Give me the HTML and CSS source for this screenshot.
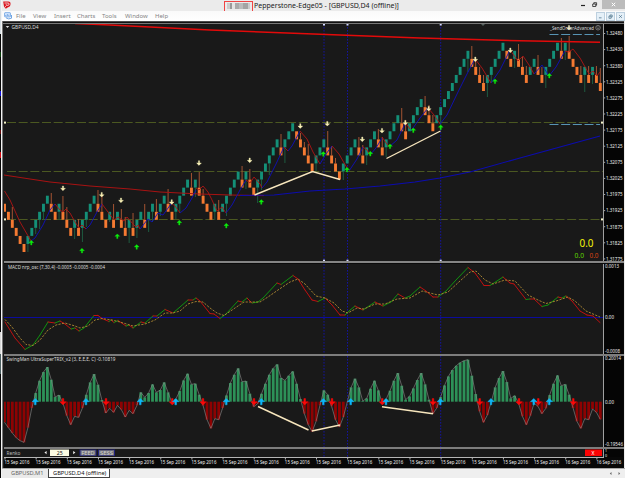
FILE: index.html
```html
<!DOCTYPE html>
<html lang="en">
<head>
<meta charset="utf-8">
<title>Pepperstone-Edge05 - [GBPUSD,D4 (offline)]</title>
<link rel="stylesheet" href="styles.css">
</head>
<body>
<div class="edge"></div>
<div class="window">
  <header class="titlebar">
    <svg class="logo" width="8" height="8" viewBox="0 0 8 8"><path d="M.2.5H5.4A2.4 2.4 0 0 1 7.5 3.2C7.5 5 6 6 4.6 6.6L2.8 7.7 1 5.6Z" fill="#d9131c"/><path d="M1.5 2H5a1.1 1.1 0 0 1 0 2.3H3.2V3.3M2 5.2 3 6.1" fill="none" stroke="#fff" stroke-width=".75"/></svg>
    <div class="caption"><span class="account"><i></i></span><span class="name">Pepperstone-Edge05 - [GBPUSD,D4 (offline)]</span></div>
    <div class="controls">
      <svg width="17" height="9" viewBox="0 0 17 9" fill="none" stroke="#222"><path d="M0 5.5H4" stroke-width="1.2"/><path d="M11.7 4H14.8V6.5H11.7ZM12.8 4V2.7H15.6V5.2H14.8" stroke-width=".8"/></svg>
      <span class="close"><svg width="5" height="5" viewBox="0 0 5 5"><path d="M.8.8 4.2 4.2M4.2.8.8 4.2" stroke="#fff"/></svg></span>
    </div>
  </header>
  <nav class="menubar">
    <svg class="docicon" width="8" height="8" viewBox="0 0 8 8"><rect x=".6" y=".7" width="5.8" height="4.2" rx=".5" fill="#dcecff" stroke="#5f9be0" stroke-width=".8"/><path d="M1.8 3V4M3.3 2V4M4.8 2.6V4" stroke="#4a87d4" stroke-width=".7"/><path d="M2 5.8Q4.5 7.8 7.5 6.2V3" fill="none" stroke="#5f9be0" stroke-width=".9"/></svg>
    <span class="m1">File</span><span class="m2">View</span><span class="m3">Insert</span><span class="m4">Charts</span><span class="m5">Tools</span><span class="m6">Window</span><span class="m7">Help</span>
    <div class="mdi">
      <b><svg viewBox="0 0 8 8"><path d="M2.2 5.5H5.2"/></svg></b><b><svg viewBox="0 0 8 8"><path d="M2.2 3.7H4.7V6H2.2ZM3.4 3.7V2.3H5.9V4.6H4.7"/></svg></b><b><svg viewBox="0 0 8 8"><path d="M2.5 2.5 5.5 5.5M5.5 2.5 2.5 5.5"/></svg></b>
    </div>
  </nav>
  <main class="chart">
    <div class="row price"><svg id="price" viewBox="4 24 599 237"></svg><svg id="priceAxis" class="axis" viewBox="603 24 20 237"></svg></div>
    <div class="divider"></div>
    <div class="row macd"><svg id="macd" viewBox="4 264 599 90"></svg><svg id="macdAxis" class="axis" viewBox="603 264 20 90"></svg></div>
    <div class="divider thin"></div>
    <div class="row trix"><svg id="trix" viewBox="4 356 599 91"></svg><svg id="trixAxis" class="axis" viewBox="603 356 20 91"></svg></div>
    <div class="divider thin"></div>
    <div class="row renko"><svg id="renko" viewBox="4 449 599 8"></svg><svg id="renkoAxis" class="axis" viewBox="603 449 20 8"></svg></div>
    <div class="row dates"><svg id="dates" viewBox="4 457 619 11"></svg></div>
  </main>
  <footer class="tabs"><span class="tab">GBPUSD,M1</span><span class="tab active">GBPUSD,D4 (offline)</span><svg class="scroll" width="12" height="5" viewBox="0 0 12 5"><path d="M2.5 1V4L.8 2.5ZM9.5 1V4L11.2 2.5Z" fill="#666"/></svg></footer>
</div>
<script src="chart.js"></script>
</body>
</html>
```
FILE: styles.css
```css
* { box-sizing: border-box; }
body {
  margin: 0;
  width: 625px;
  height: 478px;
  overflow: hidden;
  display: flex;
  background: #ececec;
  font-family: "Noto Sans", "Open Sans", sans-serif;
}
.edge {
  flex: 0 0 2px;
  border-right: 1px solid #f4f4f4;
  background: linear-gradient(#d5dde2 0 34px, #050505 34px 52px, #063c08 52px 57px, #050505 57px 91px, #1010dd 91px 96px, #050505 96px 130px, #640808 130px 134px, #050505 134px 152px, #d40a12 152px 158px, #050505 158px 332px, #d8d8d8 332px 354px, #4c6062 354px 374px, #050505 374px);
}
.window { flex: 1; display: flex; flex-direction: column; min-width: 0; }
.titlebar { height: 11px; background: #ebebeb; display: flex; align-items: flex-start; }
.logo { margin: 1px 0 0 1px; flex: none; }
.caption { display: flex; margin-left: 213px; padding-top: 1px; height: 12px; }
.account { width: 29px; height: 11px; border: 1px solid #f04444; padding: 1px 2px; }
.account i { display: block; width: 23px; height: 6px; background: linear-gradient(90deg, #ccc 0 3px, #999 3px 5px, #e3e3e3 5px 8px, #aaa 8px 12px, #bbb 12px 16px, #a4a4a4 16px 21px, #ccc 21px); }
.name { margin-left: 1px; font-size: 7px; line-height: 9px; color: #222; white-space: nowrap; width: 148px; }
.controls { display: flex; margin-left: auto; }
.controls svg { display: block; margin-right: 4px; }
.controls .close { width: 23px; height: 9px; background: #bcbcbc; padding: 2px 0 0 9px; }
.menubar { height: 10px; background: linear-gradient(#fafafa, #fff); display: flex; align-items: center; font-size: 6px; line-height: 9px; color: #858585; }
.docicon { margin-left: 2px; flex: none; }
.menubar span { flex: none; white-space: nowrap; }
.m1 { width: 17px; margin-left: 4px; }
.m2 { width: 21px; }
.m3 { width: 23px; }
.m4 { width: 25px; }
.m5 { width: 23px; }
.m6 { width: 30px; }
.mdi { margin-left: auto; display: flex; gap: 1px; }
.mdi b { width: 9px; height: 9px; border: 1px solid #bdd0df; background: #e5f0f8; }
.mdi svg { display: block; width: 7px; height: 7px; fill: none; stroke: #53788f; stroke-width: .9; }
.chart { width: 622px; height: 447px; background: linear-gradient(90deg, #777 1px, #1b1b1b 1px 2px, #080808 2px); padding-left: 2px; display: flex; flex-direction: column; }
.chart::before { content: ""; flex: 0 0 3px; margin-left: -1px; background: linear-gradient(#4a4a4a 1px, #111 1px 2px, #777 2px); }
.row { display: flex; flex: none; }
.row svg { display: block; overflow: hidden; background: #191919; flex: none; width: 599px; }
.row svg.axis { background: #050505; width: 20px; overflow: visible; }
.price, .price svg { height: 237px; }
.macd, .macd svg { height: 90px; }
.trix, .trix svg { height: 91px; }
.renko, .renko svg { height: 8px; }
.dates, .row.dates svg { height: 11px; width: 619px; background: #080808; }
.divider { flex: none; height: 3px; background: linear-gradient(#858585 0 2px, #0b0b0b 2px); }
.divider.thin { height: 2px; background: #7d7d7d; }
.chart text { font-family: "Noto Sans", sans-serif; }
.tabs { flex: 1; background: #efefef; border-top: 1px solid #aaa; display: flex; font-size: 5.7px; line-height: 8px; color: #666; white-space: nowrap; }
.tab { padding: 0 0 0 9px; width: 46px; background: #eaeaea; }
.tab.active { width: 62px; padding-left: 4px; background: #fff; color: #111; border: solid #444; border-width: 0 1px 1px; }
.scroll { margin: 2px 4px 0 auto; }
```
FILE: chart.js
```js
const NS = 'http://www.w3.org/2000/svg';
const X0 = 4.53, STEP = 3.894;
const xAt = i => X0 + STEP * i;
const pane = id => document.getElementById(id);

function add(parent, tag, attrs, text) {
  const el = document.createElementNS(NS, tag);
  for (const k in attrs) el.setAttribute(k, attrs[k]);
  if (text !== undefined) el.textContent = text;
  parent.appendChild(el);
  return el;
}
const line = (p, pts, stroke, width = 1, extra = {}) =>
  add(p, 'polyline', { points: pts, fill: 'none', stroke, 'stroke-width': width, ...extra });
const rect = (p, x, y, width, height, fill) => add(p, 'rect', { x, y, width, height, fill });
function label(p, x, y, text, size, fill, length) {
  const a = { x, y, 'font-size': size, fill };
  if (length) { a.textLength = length; a.lengthAdjust = 'spacingAndGlyphs'; }
  add(p, 'text', a, text);
}
function arrow(p, x, y, dir, fill, s = 1) {
  add(p, 'path', {
    d: 'M-.6 2.3V0H-2.4L0-2.4 2.4 0H.6V2.3Z', fill, stroke: fill, 'stroke-width': .35,
    transform: `translate(${x} ${y}) scale(${s} ${s * dir})`
  });
}
function verticals(p, y1, y2) {
  for (const x of [324, 347.5, 440.7])
    line(p, `${x},${y1} ${x},${y2}`, '#1414a0', 1, { 'stroke-dasharray': '1.6 1.4' });
}

/* ---------- price pane ---------- */
const price = pane('price');
for (const y of [122.5, 171.5, 219.5])
  line(price, `7,${y} 603,${y}`, '#4b5821', 1, { 'stroke-dasharray': '9 2.67' });
verticals(price, 24, 261);

const runs = 'D6 U6 D2 U1 D3 U1 D1 U4 D3 U1 D1 U1 D2 U1 D1 U2 D1 U2 D1 U2 D2 U4 D1 U1 D4 U1 D1 U5 D1 U1 D2 U6 D1 U3 D5 U3 D4 U4 D2 U3 D2 U4 D2 U4 D3 U9 D4 U5 D2 U1 D3 U2 D2 U4 D1 U1 D4 U1 D1 U1 D2';
const wicks = {
  2: 207, 6: 252, 8: 234, 9: 229, 10: 220, 12: 193, 14: 220, 15: 196, 16: 207, 18: 239, 19: 219, 20: 242, 21: 227, 24: 190, 25: 194,
  27: 222, 28: 204, 30: 209, 31: 217, 32: 243, 33: 213, 34: 238, 36: 204, 37: 232, 38: 222, 39: 199, 40: 216, 42: 189, 44: 219,
  45: 212, 48: 173, 49: 197, 50: 172, 51: 189, 54: 220, 55: 200, 57: 216, 61: 166, 62: 189, 63: 169, 65: 203, 66: 190,
  68: 175, 71: 134, 72: 163, 76: 133, 77: 142, 78: 144, 80: 171, 83: 131, 84: 146, 85: 158, 87: 180, 91: 137,
  92: 145, 93: 165, 96: 129, 97: 137, 98: 157, 102: 108, 103: 120, 108: 96, 109: 105, 110: 115, 112: 130,
  119: 72, 120: 46, 121: 59, 122: 67, 123: 75, 124: 97, 125: 83, 131: 68, 132: 44, 133: 57, 134: 66, 137: 55, 138: 67, 139: 88,
  143: 38, 144: 60, 145: 36, 148: 66, 149: 92, 150: 66, 151: 84, 152: 66, 153: 68
};
let level = 6, bar = 0;
for (const run of runs.split(' ')) {
  const up = run[0] === 'U';
  for (let k = 0; k < +run.slice(1); k++, bar++) {
    level += up ? 1 : -1;
    const bottom = 252 - 8.05 * level, x = xAt(bar);
    if (wicks[bar]) {
      const y1 = up ? bottom : wicks[bar], y2 = up ? wicks[bar] : bottom - 8;
      rect(price, x - .5, y1, 1, Math.max(0, y2 - y1), up ? '#1e5a40' : '#a35332');
    }
    rect(price, x - 1.45, bottom - 8, 2.9, 8, up ? '#149078' : '#f57a32');
  }
}

line(price, '75,23.5 110,25 160,27.5 210,30 320,34.3 420,38 520,40.8 600,42.2', '#e30a0a', 1.5);
line(price, '4,175 30,179 50,182 90,186 130,189 160,192 200,194 230,195 264,195.6', '#a81212', 1);
line(price, '240,195.5 274,195 310,191 345,189 380,186 415,182 440,178 470,172 520,158 560,147 600,136', '#0c0cae', 1.1);
const fast = [
  ['r', '4.5,191 10,200 20,222 31,241'], ['b', '31,241 35,238 43,225 50,210 55,204'],
  ['r', '55,204 60,210 63,212 66,209 70,213 75,222 79,228 82,225 86,229'], ['b', '86,229 90,225 97,212 102,204'],
  ['r', '102,204 108,212 114,220 118,217 124,221 127,217 133,224 136,227 138,225 140,229'],
  ['b', '140,229 148,219 152,222 158,213 163,215 171,204'], ['r', '171,203 175,206 180,213'],
  ['b', '180,213 186,208 192,198 196,190'], ['r', '196,188 199,190 203,186 208,192 212,200 217,211 222,207 226,213'],
  ['b', '226,213 232,205 240,190 246,180'], ['r', '246,180 250,183 254,177 260,184 262,188'],
  ['b', '262,188 267,182 276,164 284,147'], ['r', '284,147 288,151'], ['b', '288,151 292,146 300,131'],
  ['r', '300,131 307,139 313,152 320,164'], ['b', '320,164 326,154 332,146'], ['r', '332,146 339,154 347,168'],
  ['b', '349,171 357,159 363,147'], ['r', '363,147 367,150 370,155'], ['b', '370,155 376,148 382,138'],
  ['r', '382,137 389,147'], ['b', '389,147 397,140 405,124'], ['r', '405,122 410,129'],
  ['b', '411,131 420,118 428,108'], ['r', '428,108 434,115 440,124'], ['b', '440,124 447,115 458,92 468,72 475,59'],
  ['r', '475,59 482,68 491,83'], ['b', '491,83 500,70 510,50'], ['r', '510,50 518,61 523,56 529,65 534,74'],
  ['b', '534,74 542,65 549,76 556,67 565,51'], ['r', '565,51 569,52 573,49 580,58 589,74 593,71 597,76 600,72']
];
for (const [c, pts] of fast) line(price, pts, c === 'r' ? '#b01414' : '#1010bb', .9);

line(price, '254.5,195 312.5,171.5 340,179.5', '#f7e6bd', 1.4);
line(price, '386.5,158.5 440.5,131', '#f7e6bd', 1.4);
for (const y of [34.5, 124.5])
  line(price, `549.5,${y} 600,${y}`, '#5794b4', 1, { 'stroke-dasharray': '9 2.67' });

for (const [x, y] of [[63, 188.3], [101.7, 194.7], [121, 200.3], [171.7, 202], [199, 163], [249.7, 160.3], [300.3, 126], [327.3, 123.7], [362.3, 139.3], [382, 130.7], [405.3, 122.7], [428.7, 108.7], [475.3, 59.3], [510.3, 50.3], [569, 27.7]])
  arrow(price, x, y, -1, '#fbf3b8', 1);
for (const [x, y] of [[31.3, 242.7], [82, 250.7], [117.3, 236.3], [136.7, 247], [179.3, 222.7], [226.3, 225.7], [261.3, 202], [323.3, 154], [347, 169.7], [370.3, 153.7], [390, 146.3], [413.3, 130.3], [440.7, 127.3], [495, 81.3], [549.3, 75.7]])
  arrow(price, x, y, 1, '#0cf00c', 1);

for (const x of [324, 347.5, 440.7]) {
  rect(price, x - 1, 24, 2, 1.5, '#d7dcff');
  rect(price, x - 1, 259.7, 2, 1.6, '#d7dcff');
}
for (const y of [122.6, 219.4]) {
  rect(price, 4, y - 1, 2, 2, '#f5f3c8');
  rect(price, 601, y - 1, 2, 2, '#f5f3c8');
}
add(price, 'path', { d: 'M481 24H485L483 26Z', fill: '#55625f' });
add(price, 'path', { d: 'M5.7 26H9.3L7.5 28Z', fill: '#ddd' });
label(price, 11.5, 29, 'GBPUSD,D4', 5, '#dcdcdc', 27);
label(price, 550, 29.6, '_SendOrderAdvanced', 5, '#dcdcdc', 44);
add(price, 'circle', { cx: 598, cy: 27.7, r: 2.3, fill: 'none', stroke: '#aaa', 'stroke-width': .6 });
add(price, 'path', { d: 'M597 27.3V28L598 28.8 599 28V27.3M597.2 26.5H597.6M598.4 26.5H598.8', fill: 'none', stroke: '#aaa', 'stroke-width': .5 });
label(price, 579.5, 247.3, '0.0', 10, '#f6f60a', 14);
label(price, 574.5, 257.5, '0.0', 6.5, '#5ed400', 9.5);
label(price, 589.5, 257.5, '0.0', 6.5, '#d84414', 9);

/* ---------- MACD pane ---------- */
const macd = pane('macd');
verticals(macd, 264, 354);
line(macd, '4,317.5 603,317.5', '#0b0b9c', 1);
const main = '5,322 15,338 25,349.5 33,345 40,335 48,322 55,323 60,321 65,324 71,329 75,328 79,331 84,328 94,315.5 98,315.5 102,318.5 109,321.5 111,320 114,322.5 118,320.5 126,326 129,325 133,328 141,322 145,323 153,316 157,316 165,309.5 173,313 180,307 188,300 193,300 196,298 200,301 210,313.5 214,314 220,318.5 226,314 238,301 242,302 247,298 252,303 258,302 263,298 277,283 281,284.5 293,275.5 298,279 305,290 312,300 318,301.5 325,298 332,305 340,315 345,315 349,311 355,306 363,310 375,302 383,306 391,302 398,294 405,298 410,296 420,287 426,291 433,297 438,297 446,291 456,280 468,267.5 475,273 484,285.5 490,285.5 497,281 503,277 510,283 514,284 526,299.5 530,299 534,299 542,306.5 548,305 558,297 562,298 566,296 572,301 580,311 587,315 593,316 600,322.5'
  .split(' ').map(s => s.split(',').map(Number));
for (let i = 1; i < main.length; i++)
  line(macd, main[i - 1] + ' ' + main[i], main[i][1] < main[i - 1][1] ? '#10930f' : '#c01010', 1, { 'stroke-linecap': 'round' });
line(macd, '5,319.5 12,327 20,338 26,344.5 33,345.5 40,340 48,330 56,325 65,323 75,326 80,328 88,326 95,320 102,318.5 112,320 120,322 133,326 145,324 155,320 165,313 173,313 180,311 188,304 196,301.5 203,302 210,308 217,313 224,315.5 235,308 244,302 260,302 268,297 278,290 290,282 298,279 305,284 316,296 325,298 334,303 342,311 348,313 357,308 364,309 375,304 385,304 397,299 410,298 422,291 430,293 438,295 448,292 460,281 470,272 476,271 485,280 493,284 505,280 515,281 528,295 538,300 546,303.5 556,301 568,297 575,301 586,311 600,317',
  '#b08a32', .9, { 'stroke-dasharray': '2.2 1.3' });
label(macd, 8, 269, 'MACD nrp_osc (7,30,4) -0.0005 -0.0005 -0.0004', 5, '#dcdcdc', 97);

/* ---------- TRIX histogram, values are vertical offsets in thirds of a pixel ---------- */
const trix = pane('trix');
const ZERO = 401.7;
const values = [208, 224, 240, 254, 263, 268, 224, 165, 120, 83, 57, 42, 80, 132, 126, 150, 188, 215, 190, 193, 165, 125, 88, 63, 95, 141, 180, 166, 178, 157, 170, 192, 172, 182, 157, 118, 133, 120, 94, 118, 111, 88, 118, 150, 138, 114, 82, 62, 94, 92, 125, 158, 200, 226, 197, 200, 165, 127, 90, 65, 46, 86, 84, 122, 161, 152, 122, 92, 65, 46, 34, 75, 82, 68, 55, 92, 138, 182, 215, 236, 205, 157, 112, 125, 160, 200, 222, 192, 148, 103, 77, 103, 144, 136, 107, 83, 112, 152, 138, 113, 83, 60, 98, 140, 130, 106, 81, 60, 94, 140, 182, 165, 132, 97, 70, 51, 38, 29, 23, 20, 68, 123, 175, 208, 186, 146, 103, 75, 54, 87, 136, 128, 150, 190, 215, 188, 150, 160, 182, 166, 126, 92, 67, 98, 94, 125, 165, 205, 226, 197, 200, 168, 178, 199]
  .map(v => (v - 146) / 3);
verticals(trix, 356, 447);
values.forEach((v, i) => rect(trix, xAt(i) - 1.4, v < 0 ? ZERO + v : ZERO, 2.8, Math.abs(v), v < 0 ? '#2d9158' : '#8e0202'));
line(trix, values.map((v, i) => `${xAt(i)},${ZERO + v}`).join(' '), '#858585', .65);
for (const x of [63, 106, 172.3, 203, 254, 304.7, 332, 382.3, 433, 479.7, 519, 538.3, 573.3])
  arrow(trix, x, ZERO, -1, '#fb0808', 1.35);
for (const x of [35.3, 86, 140.3, 175.7, 226.3, 261.3, 323.3, 350.7, 386, 440.3, 491, 533.7, 549.3])
  arrow(trix, x, ZERO, 1, '#0cb8fa', 1.35);
line(trix, '258,406.5 308.5,430', '#f7e6bd', 1.4);
line(trix, '312,431 340,425', '#f7e6bd', 1.4);
line(trix, '382,406.7 433,413.7', '#f7e6bd', 1.4);
label(trix, 6.5, 361, 'SwingMan UltraSuperTRIX_v2 (3, E,E,E, C) -0.10819', 5, '#dcdcdc', 109);

/* ---------- renko control strip ---------- */
const renko = pane('renko');
verticals(renko, 449, 457);
label(renko, 6.5, 454.7, 'Renko', 5, '#bbb', 14);
add(renko, 'path', { d: 'M46.6 450.9V454.3L44.4 452.6ZM73.2 450.9V454.3L75.4 452.6Z', fill: '#eee' });
rect(renko, 50, 449.5, 19, 6.5, '#fbfbe2');
label(renko, 56.7, 454.7, '25', 5, '#111', 6);
rect(renko, 79.5, 449.5, 17, 6.5, '#20207c');
rect(renko, 98, 449.5, 17, 6.5, '#20207c');
rect(renko, 80.5, 450.2, 15, 5.2, '#77777d');
rect(renko, 99, 450.2, 15, 5.2, '#77777d');
label(renko, 81.5, 454.7, 'FEED', 5, '#d2d2d2', 13);
label(renko, 100, 454.7, 'SESS', 5, '#d2d2d2', 13);
rect(renko, 585, 449.5, 17, 6.5, '#fc0303');
label(renko, 591.5, 454.7, 'X', 5, '#fff');

/* ---------- axes ---------- */
const axes = [['priceAxis', 24, 261], ['macdAxis', 264, 354], ['trixAxis', 356, 447], ['renkoAxis', 449, 457]];
for (const [id, y1, y2] of axes) rect(pane(id), 603, y1, 1, y2 - y1, '#a0a0a0');
['1.32480', '1.32430', '1.32380', '1.32325', '1.32275', '1.32225', '1.32175', '1.32125', '1.32075', '1.32025', '1.31975', '1.31925', '1.31875', '1.31825', '1.31775']
  .forEach((t, i) => {
    const y = 33.5 + 16.1 * i;
    rect(pane('priceAxis'), 604, y - .5, 1.2, 1, '#a0a0a0');
    label(pane('priceAxis'), 606, y + 1.8, t, 5, '#f0f0f0', 16.5);
  });
label(pane('macdAxis'), 605, 268, '0.0013', 5, '#f0f0f0', 14);
label(pane('macdAxis'), 605, 319.3, '0.00', 5, '#f0f0f0', 9);
label(pane('macdAxis'), 605, 352.8, '-0.0008', 5, '#f0f0f0', 15);
label(pane('trixAxis'), 605, 360.3, '0.20014', 5, '#f0f0f0', 16);
label(pane('trixAxis'), 605, 403.5, '0.00', 5, '#f0f0f0', 9);
label(pane('trixAxis'), 605, 445.5, '-0.19546', 5, '#f0f0f0', 18);
label(pane('renkoAxis'), 605, 452.4, '1', 3.6, '#f0f0f0');
label(pane('renkoAxis'), 605, 456.6, '0', 3.6, '#f0f0f0');

const dates = pane('dates');
rect(dates, 4, 457, 600, 1, '#b5b5b5');
for (let i = 0; i < 20; i++) {
  const x = 4.5 + STEP * 8 * i;
  rect(dates, x, 457, 1, 2.5, '#b5b5b5');
  label(dates, x, 464, (i < 18 ? '15' : '16') + ' Sep 2016', 4.8, '#f0f0f0', 25);
}
```
